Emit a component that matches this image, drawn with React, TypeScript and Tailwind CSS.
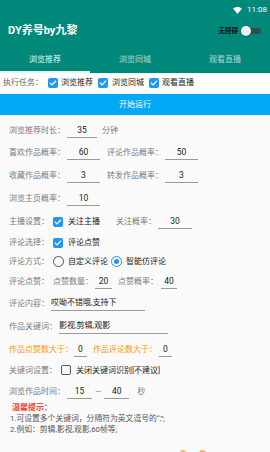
import React from "react";

function Check() {
  return (
    <div className="w-[10px] h-[10px] rounded-[2px] bg-[#2196F3] flex items-center justify-center shrink-0">
      <svg width="8" height="8" viewBox="0 0 24 24">
        <path d="M4 12.5l5 5L20 6.5" fill="none" stroke="#fff" strokeWidth="3.4" strokeLinecap="square" />
      </svg>
    </div>
  );
}

function Uncheck() {
  return <div className="w-[10px] h-[10px] rounded-[2px] border-[1.5px] border-[#555] shrink-0" />;
}

function Radio({ on }: { on?: boolean }) {
  return on ? (
    <div className="w-[11px] h-[11px] rounded-full border-[1.5px] border-[#2196F3] flex items-center justify-center shrink-0">
      <div className="w-[5px] h-[5px] rounded-full bg-[#2196F3]" />
    </div>
  ) : (
    <div className="w-[11px] h-[11px] rounded-full border-[1.5px] border-[#555] shrink-0" />
  );
}

function Inp({ v, w, left }: { v: string; w: string; left?: boolean }) {
  return (
    <div
      className={`h-[15px] border-b border-[#9a9a9a] flex items-center text-[#222] text-[8.5px] leading-[14px] shrink-0 ${w} ${
        left ? "justify-start" : "justify-center"
      }`}
    >
      {v}
    </div>
  );
}

function L({ children, cls }: { children: React.ReactNode; cls?: string }) {
  return <span className={`text-[#7a7a7a] text-[8px] leading-[11px] whitespace-nowrap shrink-0 ${cls ?? ""}`}>{children}</span>;
}

function D({ children, cls }: { children: React.ReactNode; cls?: string }) {
  return <span className={`text-[#222] text-[8px] leading-[11px] whitespace-nowrap shrink-0 ${cls ?? ""}`}>{children}</span>;
}

export default function App() {
  return (
    <div className="w-[270px] h-[452px] overflow-hidden bg-[#fafafa] [font-family:Roboto,'Noto_Sans_CJK_SC',sans-serif]">
      {/* header */}
      <div className="bg-[#00897B]">
        <div className="h-[20px] flex items-center justify-end pr-[3px] gap-[5px]">
          <svg width="9" height="7" viewBox="0 0 18 14">
            <path d="M9 14L0 3.2C2.5 1.2 5.6 0 9 0s6.5 1.2 9 3.2L9 14z" fill="#fff" />
          </svg>
          <span className="text-white text-[8px] leading-[10px]">11:08</span>
        </div>
        <div className="h-[22px] flex items-center pl-[8px] pr-[9px]">
          <span className="text-white text-[11px] font-bold leading-[14px]">DY养号by九黎</span>
          <div className="ml-auto flex items-center">
            <span className="text-[#111] text-[6.5px] font-bold leading-[9px]">无障碍</span>
            <div className="ml-[9px] w-[14px] h-[6px] rounded-full bg-[#2f4d49] flex items-center">
              <div className="-ml-[6px] w-[10px] h-[10px] rounded-full bg-[#f1f1f1] shadow-[0_1px_1px_rgba(0,0,0,0.3)]" />
            </div>
          </div>
        </div>
        <div className="h-[31px] flex">
          <div className="flex-1 flex items-end justify-center pb-[6px] border-b-2 border-[#e6f4f2]">
            <span className="text-white/90 text-[8px] leading-[11px]">浏览推荐</span>
          </div>
          <div className="flex-1 flex items-end justify-center pb-[6px] border-b-2 border-transparent">
            <span className="text-white/65 text-[8px] leading-[11px]">浏览同城</span>
          </div>
          <div className="flex-1 flex items-end justify-center pb-[6px] border-b-2 border-transparent">
            <span className="text-white/65 text-[8px] leading-[11px]">观看直播</span>
          </div>
        </div>
      </div>

      {/* task row */}
      <div className="h-[19px] flex items-center pl-[3px] bg-white">
        <L cls="text-[#666]">执行任务：</L>
        <div className="ml-[5px]"><Check /></div>
        <D cls="ml-[3px]">浏览推荐</D>
        <div className="ml-[5px]"><Check /></div>
        <D cls="ml-[4px]">浏览同城</D>
        <div className="ml-[5px]"><Check /></div>
        <D cls="ml-[3px]">观看直播</D>
      </div>

      <div className="mt-[2px] h-[21px] bg-[#03A9F4] flex items-center justify-center">
        <span className="text-white text-[8px] leading-[11px]">开始运行</span>
      </div>

      <div className="pt-[4px]">
        <div className="h-[22px] flex items-center pl-[9px]">
          <L>浏览推荐时长：</L>
          <div className="ml-[2px]"><Inp v="35" w="w-[30px]" /></div>
          <L cls="ml-[5px]">分钟</L>
        </div>
        <div className="h-[23px] flex items-center pl-[9px]">
          <L>喜欢作品概率：</L>
          <div className="ml-[2px]"><Inp v="60" w="w-[33px]" /></div>
          <L cls="ml-[7px]">评论作品概率：</L>
          <div className="ml-[2px]"><Inp v="50" w="w-[33px]" /></div>
        </div>
        <div className="h-[23px] flex items-center pl-[9px]">
          <L>收藏作品概率：</L>
          <div className="ml-[2px]"><Inp v="3" w="w-[33px]" /></div>
          <L cls="ml-[7px]">转发作品概率：</L>
          <div className="ml-[2px]"><Inp v="3" w="w-[33px]" /></div>
        </div>
        <div className="h-[23px] flex items-center pl-[9px]">
          <L>浏览主页概率：</L>
          <div className="ml-[2px]"><Inp v="10" w="w-[33px]" /></div>
        </div>
        <div className="h-[23px] flex items-center pl-[9px]">
          <L>主播设置：</L>
          <div className="ml-[4px]"><Check /></div>
          <D cls="ml-[5px]">关注主播</D>
          <L cls="ml-[16px]">关注概率：</L>
          <div className="ml-[2px]"><Inp v="30" w="w-[34px]" /></div>
        </div>
        <div className="h-[19px] flex items-center pl-[9px]">
          <L>评论选择：</L>
          <div className="ml-[4px]"><Check /></div>
          <D cls="ml-[5px]">评论点赞</D>
        </div>
        <div className="h-[18px] flex items-center pl-[9px]">
          <L>评论方式：</L>
          <div className="ml-[4px]"><Radio /></div>
          <D cls="ml-[4px]">自定义评论</D>
          <div className="ml-[3px]"><Radio on /></div>
          <D cls="ml-[4px]">智能仿评论</D>
        </div>
        <div className="h-[22px] flex items-center pl-[9px]">
          <L>评论点赞：</L>
          <L cls="ml-[4px]">点赞数量：</L>
          <div className="ml-[2px]"><Inp v="20" w="w-[17px]" /></div>
          <L cls="ml-[6px]">点赞概率：</L>
          <div className="ml-[3px]"><Inp v="40" w="w-[16px]" /></div>
        </div>
        <div className="h-[22px] flex items-center pl-[9px]">
          <L>评论内容：</L>
          <div className="ml-[2px]"><Inp v="哎呦不错哦,支持下" w="w-[94px] text-[8px]" left /></div>
        </div>
        <div className="h-[24px] flex items-center pl-[9px]">
          <L>作品关键词：</L>
          <div className="ml-[2px]"><Inp v="影视,剪辑,观影" w="w-[109px] text-[8px]" left /></div>
        </div>
        <div className="h-[22px] flex items-center pl-[9px]">
          <L cls="text-[#FF9800]">作品点赞数大于：</L>
          <div className="ml-[1px]"><Inp v="0" w="w-[13px]" /></div>
          <L cls="ml-[6px] text-[#FF9800]">作品评论数大于：</L>
          <div className="ml-[2px]"><Inp v="0" w="w-[13px]" /></div>
        </div>
        <div className="h-[20px] flex items-center pl-[9px]">
          <L>关键词设置：</L>
          <div className="ml-[4px]"><Uncheck /></div>
          <D cls="ml-[5px]">关闭关键词识别[不建议]</D>
        </div>
        <div className="h-[22px] flex items-center pl-[9px]">
          <L>浏览作品时间：</L>
          <div className="ml-[2px]"><Inp v="15" w="w-[25px]" /></div>
          <L cls="ml-[3px]">—</L>
          <div className="ml-[3px]"><Inp v="40" w="w-[25px]" /></div>
          <L cls="ml-[8px]">秒</L>
        </div>
        <div className="pl-[10px]">
          <div className="pl-[2px] text-[#F44336] text-[8px] leading-[12px] font-bold">温馨提示：</div>
          <div className="text-[#555] text-[7.8px] leading-[10.5px] whitespace-nowrap">1.可设置多个关键词，分隔符为英文逗号的“,”;</div>
          <div className="text-[#555] text-[7.8px] leading-[10.5px] whitespace-nowrap">2.例如：剪辑,影视,观影,60帧等;</div>
        </div>
        <div className="mt-[15px] flex pl-[180px] gap-[13px]">
          <div className="w-[6px] h-[3px] rounded-t-full bg-[#f9b36a]" />
          <div className="w-[7px] h-[3px] rounded-t-full bg-[#f9b36a]" />
        </div>
      </div>
    </div>
  );
}
